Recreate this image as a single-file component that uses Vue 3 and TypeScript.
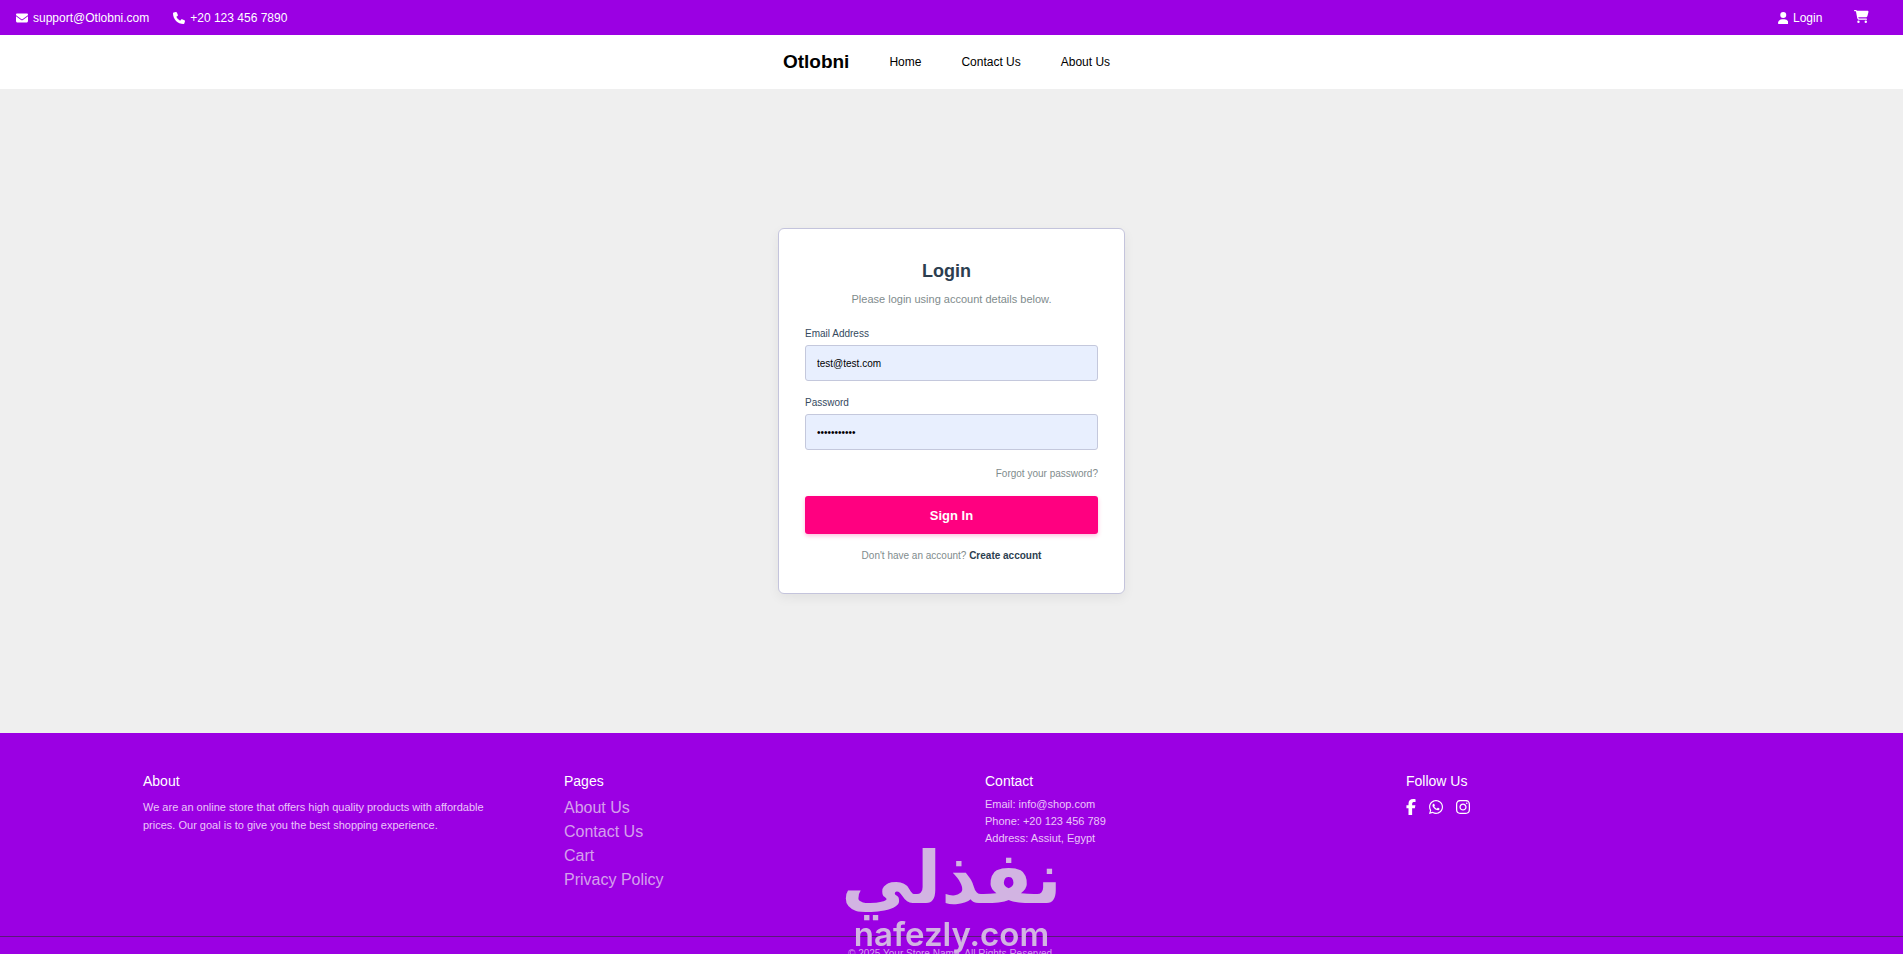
<script setup lang="ts">
import { ref } from 'vue'

interface NavLink {
  label: string
  href: string
}

const navLinks: NavLink[] = [
  { label: 'Home', href: '#home' },
  { label: 'Contact Us', href: '#contact' },
  { label: 'About Us', href: '#about' },
]

const pageLinks: NavLink[] = [
  { label: 'About Us', href: '#about' },
  { label: 'Contact Us', href: '#contact' },
  { label: 'Cart', href: '#cart' },
  { label: 'Privacy Policy', href: '#privacy' },
]

const contactLines: string[] = [
  'Email: info@shop.com',
  'Phone: +20 123 456 789',
  'Address: Assiut, Egypt',
]

const email = ref('test@test.com')
const password = ref('test1234567')
</script>

<template>
  <div class="page">
    <header>
      <div class="topbar">
        <div class="topbar-group">
          <a class="topbar-link" href="mailto:support@Otlobni.com">
            <svg class="icon" viewBox="0 0 512 512" aria-hidden="true"><path d="M48 64C21.500 64 0 85.500 0 112c0 15.100 7.100 29.300 19.200 38.400L236.800 313.600c11.400 8.500 27 8.500 38.400 0L492.800 150.400c12.100-9.100 19.200-23.300 19.200-38.400 0-26.500-21.500-48-48-48H48zM0 176V384c0 35.300 28.700 64 64 64H448c35.300 0 64-28.700 64-64V176L294.400 339.200c-22.800 17.100-54 17.100-76.800 0L0 176z" /></svg>
            <span>support@Otlobni.com</span>
          </a>
          <a class="topbar-link" href="tel:+201234567890">
            <svg class="icon" viewBox="0 0 512 512" aria-hidden="true"><path d="M164.900 24.600c-7.700-18.600-28-28.500-47.400-23.200l-88 24C12.100 30.200 0 46 0 64c0 247.400 200.600 448 448 448 18 0 33.800-12.100 38.600-29.500l24-88c5.300-19.400-4.600-39.700-23.200-47.400l-96-40c-16.300-6.800-35.200-2.100-46.300 11.600L304.700 368C234.300 334.700 177.300 277.700 144 207.300L193.300 167c13.700-11.200 18.400-30 11.600-46.300l-40-96z" /></svg>
            <span>+20 123 456 7890</span>
          </a>
        </div>
        <div class="topbar-group account">
          <a class="topbar-link" href="#login">
            <svg class="icon user" viewBox="0 0 448 512" aria-hidden="true"><path d="M224 256A128 128 0 1 0 224 0a128 128 0 1 0 0 256zm-45.700 48C79.800 304 0 383.800 0 482.300 0 498.700 13.300 512 29.700 512H418.300c16.400 0 29.700-13.300 29.700-29.700C448 383.800 368.200 304 269.700 304H178.300z" /></svg>
            <span>Login</span>
          </a>
          <a class="topbar-link cart" href="#cart" aria-label="Cart">
            <svg class="icon" viewBox="0 0 576 512" aria-hidden="true"><path d="M0 24C0 10.700 10.700 0 24 0H69.500c22 0 41.500 12.800 50.600 32h411c26.300 0 45.500 25 38.600 50.400l-41 152.300c-8.500 31.400-37 53.300-69.500 53.300H170.700l5.400 28.500c2.200 11.300 12.100 19.500 23.600 19.500H488c13.300 0 24 10.700 24 24s-10.700 24-24 24H199.700c-34.600 0-64.300-24.600-70.700-58.500L77.400 54.500c-.7-3.800-4-6.500-7.900-6.500H24C10.700 48 0 37.300 0 24zM128 464a48 48 0 1 1 96 0 48 48 0 1 1-96 0zm336-48a48 48 0 1 1 0 96 48 48 0 1 1 0-96z" /></svg>
          </a>
        </div>
      </div>
      <nav class="navbar">
        <a class="brand" href="#home">Otlobni</a>
        <a v-for="link in navLinks" :key="link.label" class="nav-link" :href="link.href">{{ link.label }}</a>
      </nav>
    </header>

    <main class="main">
      <form class="card" @submit.prevent>
        <h1>Login</h1>
        <p class="subtitle">Please login using account details below.</p>
        <label for="email">Email Address</label>
        <input id="email" v-model="email" type="email" autocomplete="email" />
        <label for="password">Password</label>
        <input id="password" v-model="password" type="password" autocomplete="current-password" />
        <a class="forgot" href="#forgot">Forgot your password?</a>
        <button type="submit">Sign In</button>
        <p class="signup">Don't have an account? <a href="#register">Create account</a></p>
      </form>
    </main>

    <footer class="footer">
      <div class="columns">
        <section>
          <h2>About</h2>
          <p class="about">We are an online store that offers high quality products with affordable prices. Our goal is to give you the best shopping experience.</p>
        </section>
        <section>
          <h2>Pages</h2>
          <ul class="pages">
            <li v-for="link in pageLinks" :key="link.label"><a :href="link.href">{{ link.label }}</a></li>
          </ul>
        </section>
        <section>
          <h2>Contact</h2>
          <p v-for="line in contactLines" :key="line" class="contact">{{ line }}</p>
        </section>
        <section>
          <h2>Follow Us</h2>
          <div class="social">
            <a href="#facebook" aria-label="Facebook">
              <svg class="facebook" viewBox="0 0 320 512" aria-hidden="true"><path d="M80 299.300V512H196V299.300h86.500l18-97.800H196V166.900c0-51.700 20.300-71.500 72.700-71.500 16.300 0 29.400.4 37 1.200V7.900C291.400 4 256.400 0 236.200 0 129.300 0 80 50.500 80 159.400v42.100H14v97.800H80z" /></svg>
            </a>
            <a href="#whatsapp" aria-label="WhatsApp">
              <svg viewBox="0 32 448 448" aria-hidden="true"><path d="M380.900 97.100C339 55.100 283.200 32 223.900 32c-122.400 0-222 99.600-222 222 0 39.100 10.200 77.300 29.600 111L0 480l117.700-30.900c32.400 17.700 68.900 27 106.100 27h.1c122.300 0 224.100-99.600 224.100-222 0-59.300-25.200-115-67.100-157zm-157 341.600c-33.200 0-65.700-8.900-94-25.700l-6.700-4-69.800 18.300L72 359.200l-4.400-7c-18.500-29.400-28.200-63.300-28.200-98.200 0-101.700 82.800-184.500 184.600-184.500 49.300 0 95.600 19.200 130.400 54.100 34.800 34.900 56.200 81.200 56.100 130.500 0 101.800-84.900 184.600-186.600 184.600zm101.200-138.200c-5.500-2.800-32.800-16.200-37.900-18-5.100-1.900-8.800-2.800-12.500 2.800-3.700 5.600-14.300 18-17.600 21.800-3.200 3.700-6.500 4.200-12 1.400-32.600-16.300-54-29.100-75.500-66-5.700-9.800 5.700-9.100 16.300-30.300 1.800-3.700.9-6.900-.5-9.700-1.400-2.800-12.500-30.100-17.100-41.200-4.500-10.800-9.100-9.300-12.500-9.500-3.200-.2-6.900-.2-10.600-.2-3.700 0-9.700 1.400-14.800 6.900-5.100 5.600-19.400 19-19.400 46.300 0 27.300 19.900 53.700 22.600 57.400 2.800 3.700 39.100 59.700 94.800 83.800 35.200 15.200 49 16.500 66.600 13.900 10.700-1.600 32.800-13.400 37.400-26.400 4.600-13 4.600-24.100 3.200-26.400-1.300-2.500-5-3.900-10.500-6.600z" /></svg>
            </a>
            <a href="#instagram" aria-label="Instagram">
              <svg viewBox="0 32 448 448" aria-hidden="true"><path d="M224.100 141c-63.600 0-114.900 51.300-114.900 114.900s51.300 114.900 114.900 114.900S339 319.500 339 255.900 287.700 141 224.100 141zm0 189.600c-41.100 0-74.700-33.500-74.700-74.700s33.500-74.700 74.700-74.700 74.700 33.500 74.700 74.700-33.600 74.700-74.700 74.700zm146.400-194.300c0 14.900-12 26.800-26.800 26.800-14.900 0-26.800-12-26.800-26.800s12-26.800 26.800-26.800 26.800 12 26.800 26.800zm76.100 27.200c-1.700-35.900-9.900-67.700-36.200-93.900-26.200-26.200-58-34.400-93.900-36.200-37-2.100-147.900-2.100-184.900 0-35.800 1.700-67.600 9.900-93.900 36.100s-34.400 58-36.200 93.900c-2.100 37-2.100 147.900 0 184.900 1.700 35.900 9.900 67.700 36.200 93.900s58 34.400 93.900 36.200c37 2.100 147.900 2.100 184.900 0 35.900-1.700 67.700-9.900 93.900-36.200 26.200-26.200 34.400-58 36.200-93.900 2.100-37 2.100-147.800 0-184.800zM398.800 388c-7.800 19.600-22.900 34.700-42.600 42.600-29.500 11.700-99.500 9-132.100 9s-102.700 2.600-132.100-9c-19.600-7.800-34.700-22.900-42.600-42.600-11.700-29.500-9-99.500-9-132.100s-2.600-102.700 9-132.100c7.800-19.600 22.900-34.700 42.600-42.600 29.500-11.700 99.500-9 132.100-9s102.700-2.600 132.100 9c19.600 7.800 34.700 22.900 42.600 42.600 11.700 29.500 9 99.500 9 132.100s2.700 102.700-9 132.100z" /></svg>
            </a>
          </div>
        </section>
      </div>
      <p class="copyright">© 2025 Your Store Name. All Rights Reserved.</p>
    </footer>

    <div class="watermark">
      <span class="watermark-arabic" lang="ar" dir="rtl">نفذلي</span>
      <span class="watermark-latin">nafezly.com</span>
    </div>
  </div>
</template>

<style>
html,
body {
  margin: 0;
}
</style>

<style scoped>
.page {
  height: 100vh;
  overflow-y: auto;
  scrollbar-width: none;
  background: #efefef;
  color: #000;
  font-family: "Liberation Sans", Arial, sans-serif;
  font-size: 12px;
}

a {
  color: inherit;
  text-decoration: none;
}

h1,
h2,
p,
ul {
  margin: 0;
  padding: 0;
}

svg {
  display: block;
  fill: currentColor;
}

.topbar {
  display: flex;
  justify-content: space-between;
  height: 35px;
  padding: 0 34px 0 16px;
  background: #9b00e3;
  color: #fff;
}

.topbar-group {
  display: flex;
  align-items: center;
  gap: 24px;
}

.topbar-group.account {
  gap: 32px;
}

.topbar-link {
  display: flex;
  align-items: center;
  gap: 5px;
}

.icon {
  height: 12px;
}

.cart {
  padding-bottom: 3px;
}

.cart .icon {
  height: 13px;
}

.navbar {
  display: flex;
  align-items: center;
  justify-content: center;
  gap: 40px;
  height: 54px;
  padding-right: 10px;
  background: #fff;
}

.brand {
  font-size: 19px;
  font-weight: 700;
}

.main {
  display: flex;
  align-items: center;
  justify-content: center;
  min-height: calc(100vh - 310px);
}

.card {
  display: flex;
  flex-direction: column;
  box-sizing: border-box;
  width: 347px;
  padding: 30px 26px;
  border: 1px solid #c4c4dc;
  border-radius: 6px;
  background: #fff;
  box-shadow: 0 4px 12px rgba(0, 0, 0, 0.06);
  color: #34495e;
  font-size: 10px;
}

h1 {
  padding-right: 10px;
  color: #2c3e50;
  font-size: 18px;
  line-height: 24px;
  text-align: center;
}

.subtitle {
  margin: 8px 0 20px;
  color: #7f8c8d;
  font-size: 11px;
  line-height: 16px;
  text-align: center;
}

label {
  margin-bottom: 4px;
  line-height: 14px;
}

input {
  box-sizing: border-box;
  width: 100%;
  height: 36px;
  margin: 0 0 15px;
  padding: 0 11px;
  border: 1px solid #c4c8dc;
  border-radius: 3px;
  outline: none;
  background: #e8effe;
  color: #000;
  font: inherit;
}

.forgot {
  align-self: flex-end;
  margin-bottom: 15px;
  padding-top: 2px;
  color: #7f8c8d;
  line-height: 14px;
}

button {
  height: 38px;
  border: 0;
  border-radius: 3px;
  background: #ff0080;
  box-shadow: 0 2px 4px rgba(255, 0, 128, 0.25);
  color: #fff;
  font: inherit;
  font-size: 13px;
  font-weight: 700;
}

.signup {
  margin-top: 15px;
  color: #7f8c8d;
  line-height: 14px;
  text-align: center;
}

.signup a {
  color: #2c3e50;
  font-weight: 700;
}

.footer {
  background: #9b00e3;
  color: #fff;
}

.columns {
  display: grid;
  grid-template-columns: repeat(4, 1fr);
  gap: 67px;
  box-sizing: border-box;
  min-height: 203px;
  padding: 39px 143px 0;
}

h2 {
  margin-bottom: 6px;
  font-size: 14px;
  font-weight: 400;
  line-height: 18px;
}

.about {
  padding-top: 2px;
  color: #ebc7f9;
  font-size: 11px;
  line-height: 18px;
}

.pages {
  color: #d5a0ec;
  font-size: 16px;
  line-height: 24px;
  list-style: none;
}

.contact {
  color: #ebc7f9;
  font-size: 11px;
  line-height: 17px;
}

.social {
  display: flex;
  align-items: center;
  gap: 13px;
  height: 16px;
  padding-top: 3px;
}

.social svg {
  height: 14px;
}

.social .facebook {
  height: 16px;
}

.copyright {
  padding: 11px 0 16px;
  border-top: 1px solid #5a1a78;
  color: #d5a0ec;
  font-size: 10px;
  line-height: 12px;
  text-align: center;
}

.watermark {
  position: fixed;
  bottom: 0;
  left: 50%;
  display: flex;
  flex-direction: column;
  align-items: center;
  transform: translateX(-50%);
  color: #d2b4e2;
  pointer-events: none;
}

.watermark-arabic {
  font-family: "DejaVu Sans", sans-serif;
  font-size: 72px;
  font-weight: 700;
  line-height: 72px;
}

.watermark-latin {
  font-family: "Inter", sans-serif;
  font-size: 33px;
  font-weight: 600;
  line-height: 40px;
}
</style>
